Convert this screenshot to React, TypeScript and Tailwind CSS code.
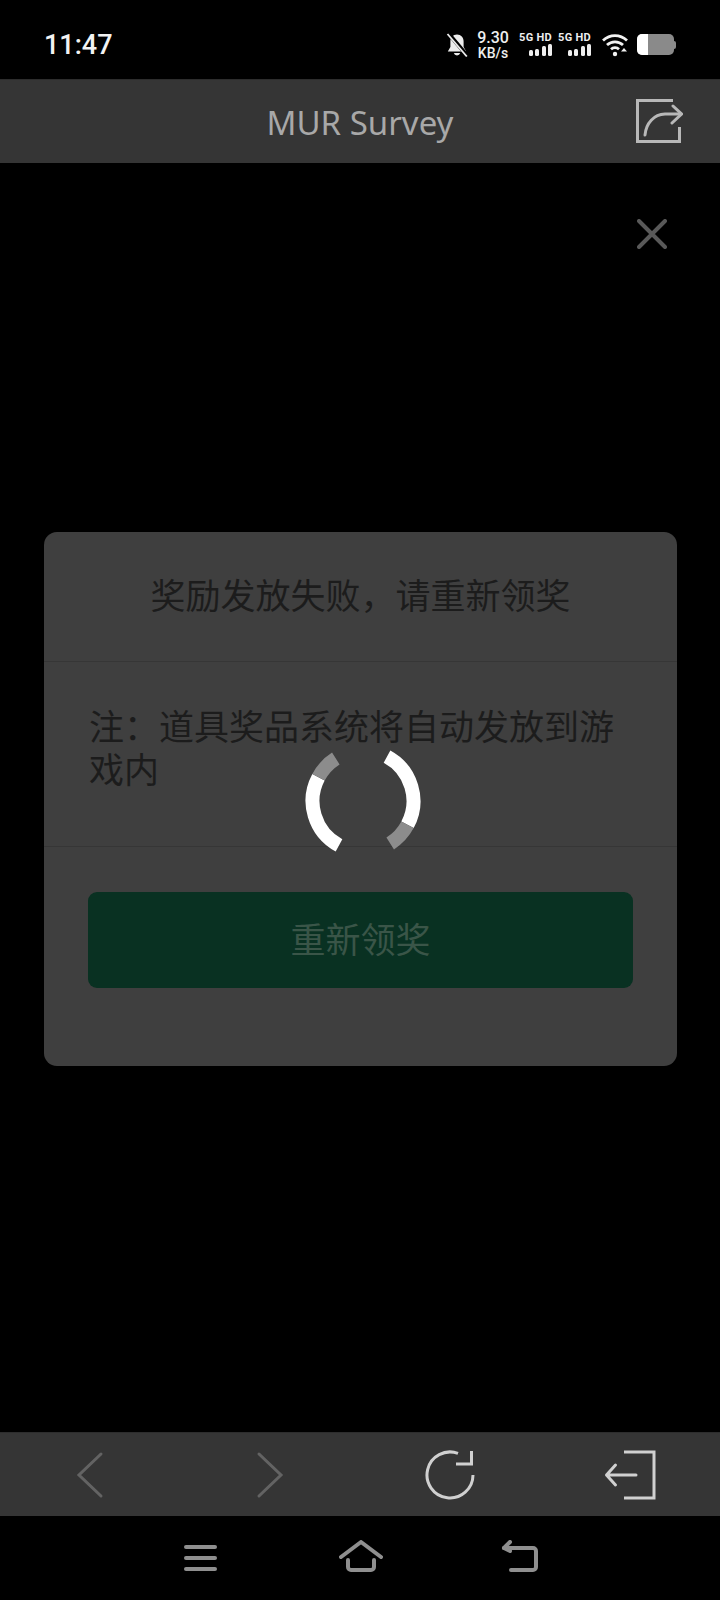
const cjk = "font-['Noto_Sans_CJK_SC','Noto_Sans',sans-serif]";

function MutedBell() {
  return (
    <svg width="22" height="24" viewBox="0 0 22 24" fill="none">
      <path d="M11 1.5c-4 0-6.6 2.9-6.6 6.9v5.6L1.8 18.6h18.4l-2.6-4.6V8.4c0-4-2.6-6.9-6.6-6.9z" fill="#ececec" />
      <path d="M7.8 20a3.3 3.3 0 0 0 6.4 0z" fill="#ececec" />
      <path d="M2.5 0.5L21 22.5" stroke="#000" strokeWidth="4" />
      <path d="M1.5 1L20.8 23.5" stroke="#ececec" strokeWidth="1.8" />
    </svg>
  );
}

function Signal() {
  return (
    <div className="flex items-end justify-end gap-[2.5px] h-[12px]">
      <span className="w-[4px] h-[6px] rounded-[1.5px] bg-[#eeeeee]" />
      <span className="w-[4px] h-[7px] rounded-[1.5px] bg-[#eeeeee]" />
      <span className="w-[4px] h-[10px] rounded-[1.5px] bg-[#eeeeee]" />
      <span className="w-[4px] h-[12px] rounded-[1.5px] bg-[#eeeeee]" />
    </div>
  );
}

function SimStatus() {
  return (
    <div className="flex flex-col items-end w-[33px]">
      <span className="text-[11px] leading-[12px] font-bold tracking-[0.3px] whitespace-nowrap text-[#eeeeee] font-['Roboto',sans-serif]">
        5G HD
      </span>
      <div className="mb-[2px]">
        <Signal />
      </div>
    </div>
  );
}

function Wifi() {
  return (
    <svg width="26" height="24" viewBox="0 0 26 24" fill="none" stroke="#f2f2f2" strokeWidth="2.8">
      <path d="M1 7.5C8 1 18 1 25 7.5" />
      <path d="M5 12C9.5 7.8 16.5 7.8 21 12" />
      <path d="M9 16.3C11.3 14.2 14.7 14.2 17 16.3" />
      <circle cx="13" cy="21" r="2.2" fill="#f2f2f2" stroke="none" />
      <path d="M19 18.5l3-3.5 3 3.5z" fill="#f2f2f2" stroke="none" />
    </svg>
  );
}

function Battery() {
  return (
    <div className="flex items-center">
      <div className="flex w-[37px] h-[21px] rounded-[5px] overflow-hidden bg-[#8a8a8a]">
        <div className="w-[11px] bg-white" />
      </div>
      <div className="w-[2px] h-[8px] rounded-r-[2px] bg-[#8a8a8a]" />
    </div>
  );
}

function StatusBar() {
  return (
    <div className="h-[79px] bg-black flex items-center justify-between pl-[44px] pr-[44px] shrink-0">
      <span className="text-[27px] leading-none font-medium text-[#f2f2f2] font-['Roboto',sans-serif] mt-[11px]">
        11:47
      </span>
      <div className="flex items-center mt-[10px]">
        <div className="mr-[-1px] ml-[1px]">
          <MutedBell />
        </div>
        <div className="flex flex-col items-center w-[34px] ml-[9px] font-['Roboto',sans-serif] text-[#eeeeee] font-medium">
          <span className="text-[16px] leading-[16px]">9.30</span>
          <span className="text-[14px] leading-[14px]">KB/s</span>
        </div>
        <div className="ml-[9px]">
          <SimStatus />
        </div>
        <div className="ml-[6px]">
          <SimStatus />
        </div>
        <div className="ml-[11px]">
          <Wifi />
        </div>
        <div className="ml-[9px]">
          <Battery />
        </div>
      </div>
    </div>
  );
}

function Header() {
  return (
    <div className="relative h-[84px] bg-[#353535] border-t border-[#2d2d2d] flex items-center justify-center shrink-0">
      <span className="mt-[2px] text-[33px] font-normal text-[#a8a8a8] font-['Noto_Sans',sans-serif]">MUR Survey</span>
      <svg className="absolute left-[633px] top-[17px]" width="50" height="48" viewBox="0 0 50 48" fill="none" stroke="#b8b8b8" strokeWidth="3">
        <path d="M40 3.5H4.5V44.5H46.5V30" />
        <path d="M12 38C13 26 21 17.5 32 17H48" strokeLinecap="round" />
        <path d="M40 9L48.5 17L39 26" strokeLinecap="round" />
      </svg>
    </div>
  );
}

function Spinner() {
  return (
    <svg className="absolute left-[303px] top-[741px]" width="120" height="120" viewBox="-60 -60 120 120" fill="none" strokeWidth="14">
      <path d="M-24 44.4A50.5 50.5 0 0 1 -44.5 -23.8" stroke="#ffffff" />
      <path d="M-44.5 -23.8A50.5 50.5 0 0 1 -27.2 -42.5" stroke="#8c8c8c" />
      <path d="M24 -44.4A50.5 50.5 0 0 1 44.5 23.8" stroke="#ffffff" />
      <path d="M44.5 23.8A50.5 50.5 0 0 1 27.2 42.5" stroke="#8c8c8c" />
    </svg>
  );
}

function RewardDialog() {
  return (
    <div className={`ml-[44px] mr-[43px] rounded-[13px] bg-[#3f3f3f] ${cjk}`}>
      <div className="h-[130px] pb-[4px] flex items-center justify-center border-b border-[#363636] text-[35px] text-[#1c1c1c]">
        奖励发放失败，请重新领奖
      </div>
      <div className="h-[185px] border-b border-[#363636] pl-[45px] pr-[46px] pt-[41px] text-[35px] leading-[43px] text-[#1c1c1c]">
        注：道具奖品系统将自动发放到游戏内
      </div>
      <div className="px-[44px] pt-[45px] pb-[78px]">
        <div className="h-[96px] pb-[4px] rounded-[9px] bg-[#093122] flex items-center justify-center text-[35px] text-[#3a5548]">
          重新领奖
        </div>
      </div>
    </div>
  );
}

function BrowserBar() {
  return (
    <div className="h-[84px] bg-[#353535] border-t border-[#2d2d2d] flex items-center shrink-0">
      <svg className="ml-[76px]" width="28" height="48" viewBox="0 0 28 48" fill="none" stroke="#636363" strokeWidth="3" strokeLinecap="round">
        <path d="M25 3L3 24L25 45" />
      </svg>
      <svg className="ml-[152px]" width="28" height="48" viewBox="0 0 28 48" fill="none" stroke="#636363" strokeWidth="3" strokeLinecap="round">
        <path d="M3 3L25 24L3 45" />
      </svg>
      <svg className="ml-[141px]" width="52" height="52" viewBox="0 0 52 52" fill="none" stroke="#d0d0d0" strokeWidth="3">
        <path d="M33 4.4A23 23 0 1 0 48 26" />
        <path d="M46.5 2V15H31" />
      </svg>
      <svg className="ml-[126px]" width="54" height="52" viewBox="0 0 54 52" fill="none" stroke="#d0d0d0" strokeWidth="3">
        <path d="M21 3H51V49H21" />
        <path d="M33 26H3.5M12.5 16L3.5 26L12.5 36" strokeLinecap="round" strokeLinejoin="round" />
      </svg>
    </div>
  );
}

function NavBar() {
  return (
    <div className="h-[84px] bg-black flex items-center shrink-0">
      <div className="ml-[184px] w-[33px] flex flex-col gap-[7px]">
        <span className="h-[4px] rounded-full bg-[#8f8f8f]" />
        <span className="h-[4px] rounded-full bg-[#8f8f8f]" />
        <span className="h-[4px] rounded-full bg-[#8f8f8f]" />
      </div>
      <svg className="ml-[122px] mb-[4px]" width="44" height="32" viewBox="0 0 44 32" fill="none" stroke="#8f8f8f" strokeWidth="4" strokeLinecap="round" strokeLinejoin="round">
        <path d="M2 17L22 2L42 17" />
        <path d="M9 20V27a3 3 0 0 0 3 3H32a3 3 0 0 0 3-3V20" />
      </svg>
      <svg className="ml-[118px] mb-[4px]" width="38" height="32" viewBox="0 0 38 32" fill="none" stroke="#8f8f8f" strokeWidth="4" strokeLinecap="round" strokeLinejoin="round">
        <path d="M3 8H32a3 3 0 0 1 3 3V27a3 3 0 0 1-3 3H10" />
        <path d="M9 2L3 8L9 11" />
      </svg>
    </div>
  );
}

export default function App() {
  return (
    <div className="relative w-[720px] h-[1600px] bg-black flex flex-col overflow-hidden">
      <StatusBar />
      <Header />
      <div className="flex-1">
        <div className="flex justify-end pt-[56px] pr-[53px]">
          <svg width="30" height="30" viewBox="0 0 30 30" fill="none" stroke="#595959" strokeWidth="4" strokeLinecap="round">
            <path d="M2 2L28 28M28 2L2 28" />
          </svg>
        </div>
        <div className="mt-[283px]">
          <RewardDialog />
        </div>
      </div>
      <BrowserBar />
      <NavBar />
      <Spinner />
    </div>
  );
}
